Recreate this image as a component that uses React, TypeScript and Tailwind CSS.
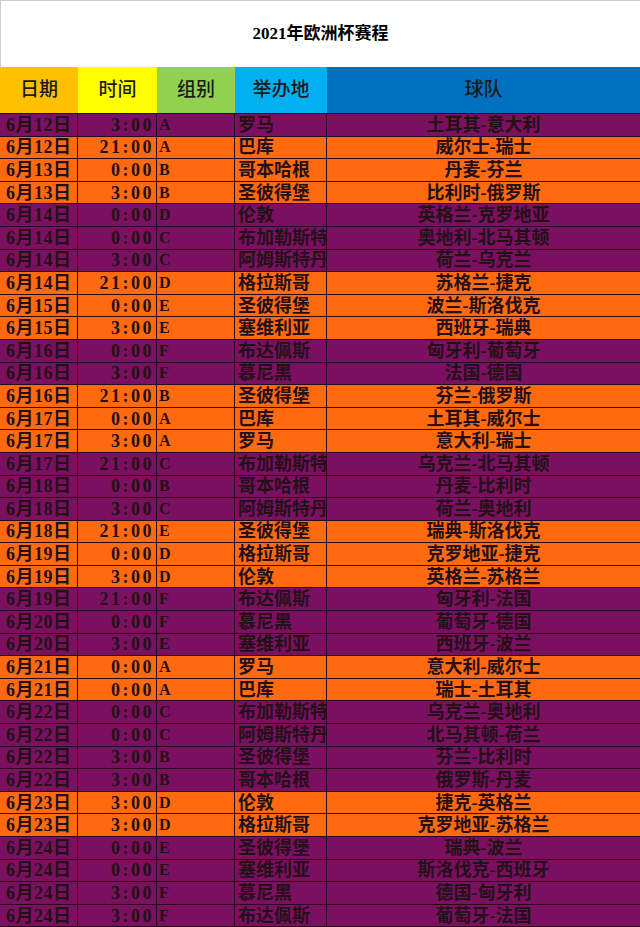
const rows: [string, string, string, string, string, "p" | "o"][] = [
  ["6月12日", "3:00", "A", "罗马", "土耳其-意大利", "p"],
  ["6月12日", "21:00", "A", "巴库", "威尔士-瑞士", "o"],
  ["6月13日", "0:00", "B", "哥本哈根", "丹麦-芬兰", "o"],
  ["6月13日", "3:00", "B", "圣彼得堡", "比利时-俄罗斯", "o"],
  ["6月14日", "0:00", "D", "伦敦", "英格兰-克罗地亚", "p"],
  ["6月14日", "0:00", "C", "布加勒斯特", "奥地利-北马其顿", "p"],
  ["6月14日", "3:00", "C", "阿姆斯特丹", "荷兰-乌克兰", "p"],
  ["6月14日", "21:00", "D", "格拉斯哥", "苏格兰-捷克", "o"],
  ["6月15日", "0:00", "E", "圣彼得堡", "波兰-斯洛伐克", "o"],
  ["6月15日", "3:00", "E", "塞维利亚", "西班牙-瑞典", "o"],
  ["6月16日", "0:00", "F", "布达佩斯", "匈牙利-葡萄牙", "p"],
  ["6月16日", "3:00", "F", "慕尼黑", "法国-德国", "p"],
  ["6月16日", "21:00", "B", "圣彼得堡", "芬兰-俄罗斯", "o"],
  ["6月17日", "0:00", "A", "巴库", "土耳其-威尔士", "o"],
  ["6月17日", "3:00", "A", "罗马", "意大利-瑞士", "o"],
  ["6月17日", "21:00", "C", "布加勒斯特", "乌克兰-北马其顿", "p"],
  ["6月18日", "0:00", "B", "哥本哈根", "丹麦-比利时", "p"],
  ["6月18日", "3:00", "C", "阿姆斯特丹", "荷兰-奥地利", "p"],
  ["6月18日", "21:00", "E", "圣彼得堡", "瑞典-斯洛伐克", "o"],
  ["6月19日", "0:00", "D", "格拉斯哥", "克罗地亚-捷克", "o"],
  ["6月19日", "3:00", "D", "伦敦", "英格兰-苏格兰", "o"],
  ["6月19日", "21:00", "F", "布达佩斯", "匈牙利-法国", "p"],
  ["6月20日", "0:00", "F", "慕尼黑", "葡萄牙-德国", "p"],
  ["6月20日", "3:00", "E", "塞维利亚", "西班牙-波兰", "p"],
  ["6月21日", "0:00", "A", "罗马", "意大利-威尔士", "o"],
  ["6月21日", "0:00", "A", "巴库", "瑞士-土耳其", "o"],
  ["6月22日", "0:00", "C", "布加勒斯特", "乌克兰-奥地利", "p"],
  ["6月22日", "0:00", "C", "阿姆斯特丹", "北马其顿-荷兰", "p"],
  ["6月22日", "3:00", "B", "圣彼得堡", "芬兰-比利时", "p"],
  ["6月22日", "3:00", "B", "哥本哈根", "俄罗斯-丹麦", "p"],
  ["6月23日", "3:00", "D", "伦敦", "捷克-英格兰", "o"],
  ["6月23日", "3:00", "D", "格拉斯哥", "克罗地亚-苏格兰", "o"],
  ["6月24日", "0:00", "E", "圣彼得堡", "瑞典-波兰", "p"],
  ["6月24日", "0:00", "E", "塞维利亚", "斯洛伐克-西班牙", "p"],
  ["6月24日", "3:00", "F", "慕尼黑", "德国-匈牙利", "p"],
  ["6月24日", "3:00", "F", "布达佩斯", "葡萄牙-法国", "p"],
];

const font = "font-['Liberation_Serif','Noto_Sans_CJK_SC',serif]";
const cols = "grid grid-cols-[78px_79px_78px_92px_1fr]";

export default function App() {
  return (
    <div className={`w-[640px] h-[927px] overflow-hidden bg-white ${font}`}>
      <div className="h-[67px] border-t border-l border-[#c8cdd6] flex items-center justify-center">
        <h1 className="text-[17px] font-bold text-black">2021年欧洲杯赛程</h1>
      </div>

      <div className={`${cols} h-[46px] text-[19px] font-medium text-[#1b1b1b]`}>
        <div className="bg-[#ffc000] flex items-center justify-center">日期</div>
        <div className="bg-[#ffff00] flex items-center justify-center">时间</div>
        <div className="bg-[#92d050] flex items-center justify-center">组别</div>
        <div className="bg-[#00b0f0] flex items-center justify-center">举办地</div>
        <div className="bg-[#0070c0] flex items-center justify-center">球队</div>
      </div>

      <div className="border-t border-[#2a0818]">
        {rows.map(([date, time, group, venue, teams, c], i) => (
          <div
            key={i}
            className={`${cols} h-[22.6px] border-b border-[#2a0818] text-[18px] leading-none font-bold text-[#241018] ${
              c === "p" ? "bg-[#7b1060]" : "bg-[#ff6a0e]"
            }`}
          >
            <div className="border-r border-[#2a0818] flex items-center pl-[6px] tracking-[0.5px]">{date}</div>
            <div className="border-r border-[#2a0818] flex items-center justify-end pr-[2px] tracking-[2.5px]">{time}</div>
            <div className="border-r border-[#2a0818] flex items-center pl-[2px] text-[16px]">{group}</div>
            <div className="border-r border-[#2a0818] flex items-center pl-[3px] whitespace-nowrap overflow-hidden">{venue}</div>
            <div className="flex items-center justify-center whitespace-nowrap">{teams}</div>
          </div>
        ))}
      </div>
    </div>
  );
}
